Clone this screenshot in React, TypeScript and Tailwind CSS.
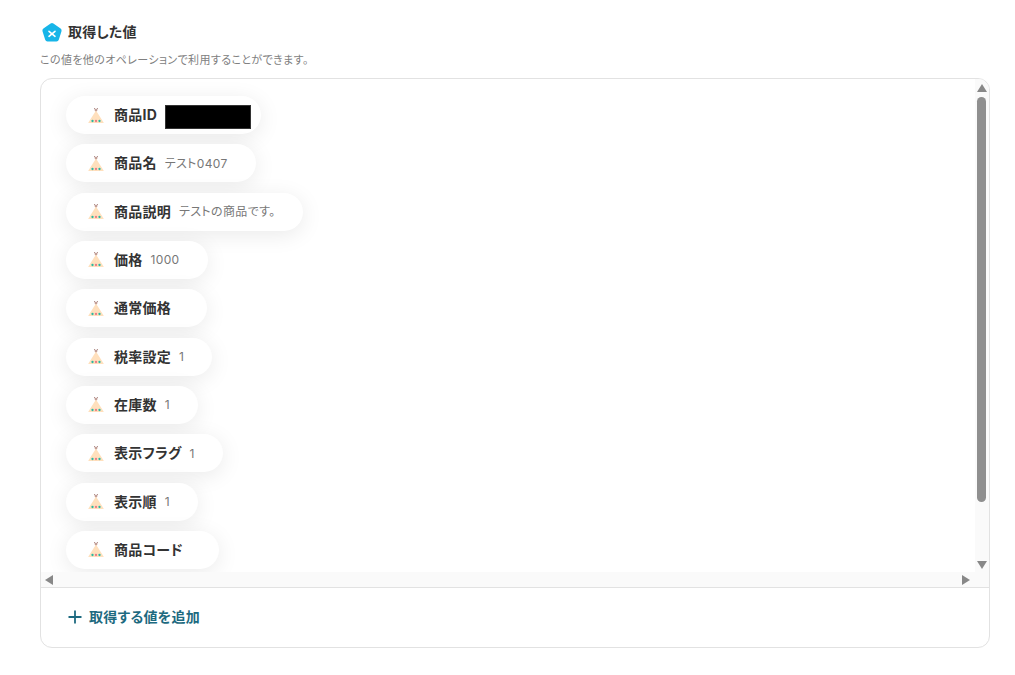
const FONT = "font-['Inter','Noto_Sans_CJK_JP','Noto_Sans',sans-serif] [font-feature-settings:'palt']";

type Row = { label: string; value?: string; redacted?: boolean };

const rows: Row[] = [
  { label: "商品ID", redacted: true },
  { label: "商品名", value: "テスト0407" },
  { label: "商品説明", value: "テストの商品です。" },
  { label: "価格", value: "1000" },
  { label: "通常価格" },
  { label: "税率設定", value: "1" },
  { label: "在庫数", value: "1" },
  { label: "表示フラグ", value: "1" },
  { label: "表示順", value: "1" },
  { label: "商品コード" },
];

function Tipi() {
  return (
    <svg width="16" height="18" viewBox="0 0 16 18" className="mt-[1px] shrink-0">
      <path d="M6.400 1 8 4l1.600-3" fill="none" stroke="#a8807a" strokeWidth="1" />
      <circle cx="8" cy="3.400" r="1.200" fill="#c09a92" />
      <path d="M8 3.500 15.600 15.500a.4.4 0 0 1-.4.6H.8a.4.4 0 0 1-.4-.6Z" fill="#ffe0bd" />
      <circle cx="4.500" cy="14" r="1.150" fill="#2ab8a2" />
      <circle cx="8" cy="14" r="1.150" fill="#ee7b86" />
      <circle cx="11.500" cy="14" r="1.150" fill="#2ab8a2" />
    </svg>
  );
}

function Logo() {
  return (
    <svg width="22" height="22" viewBox="0 0 22 22" className="mt-[1px] shrink-0">
      <path
        d="M9.600 1.400a2.400 2.400 0 0 1 2.800 0l7.200 5.200a2.400 2.400 0 0 1 .9 2.700l-2.700 8.500a2.400 2.400 0 0 1-2.300 1.700H6.500a2.400 2.400 0 0 1-2.300-1.700L1.500 9.300a2.400 2.400 0 0 1 .9-2.700Z"
        fill="#17b5e8"
      />
      <path d="M8 9.300l6 5M14 9.300l-6 5" stroke="#fff" strokeWidth="1.600" strokeLinecap="round" />
    </svg>
  );
}

function Pill({ row }: { row: Row }) {
  return (
    <div className="flex h-[38px] w-fit shrink-0 items-center rounded-full bg-white pl-[22px] pr-[28px] shadow-[0_4px_22px_rgba(0,0,0,0.085)]">
      <Tipi />
      <span className="ml-[10px] text-[14px] font-bold leading-none tracking-[0.25px] whitespace-nowrap text-[#333333]">{row.label}</span>
      {row.redacted ? (
        <span className="ml-[8px] -mr-[18px] mt-[4px] block h-[24px] w-[86px] border border-[#333333] bg-black" />
      ) : (
        <span className="ml-[8px] mt-[1px] text-[12px] leading-none tracking-[0.35px] whitespace-nowrap text-[#777777]">{row.value}</span>
      )}
    </div>
  );
}

export default function App() {
  return (
    <div className={`${FONT} h-[675px] w-[1015px] overflow-hidden bg-white pl-[40px] pr-[25px] pt-[21px]`}>
      <div className="flex h-[22px] items-center gap-[5px] pl-[1px]">
        <Logo />
        <h2 className="text-[14px] font-bold leading-none tracking-[0.2px] text-[#333333]">取得した値</h2>
      </div>
      <p className="mt-[10px] text-[11px] leading-[14px] tracking-[0.38px] text-[#808080]">この値を他のオペレーションで利用することができます。</p>
      <div className="mt-[11px] h-[570px] overflow-hidden rounded-[12px] border border-[#e2e2e2]">
        <div className="flex h-[493px]">
          <div className="flex min-w-0 flex-1 flex-col gap-[10.33px] overflow-hidden pl-[25px] pt-[17px]">
            {rows.map((r) => (
              <Pill key={r.label} row={r} />
            ))}
          </div>
          <div className="flex w-[14px] flex-col items-center bg-[#fafafa] pr-[1px]">
            <svg width="10" height="8" viewBox="0 0 10 8" className="mt-[5px] shrink-0">
              <path d="M5 0 10 8H0Z" fill="#888888" />
            </svg>
            <div className="mt-[5px] h-[405px] w-[9px] rounded-[5px] bg-[#8f8f8f]" />
            <svg width="10" height="8" viewBox="0 0 10 8" className="mt-[59px] shrink-0">
              <path d="M5 8 10 0H0Z" fill="#888888" />
            </svg>
          </div>
        </div>
        <div className="flex h-[15px] items-center justify-between bg-[#fafafa] pl-[4px] pr-[19px]">
          <svg width="8" height="10" viewBox="0 0 8 10">
            <path d="M0 5 8 0V10Z" fill="#888888" />
          </svg>
          <svg width="8" height="10" viewBox="0 0 8 10">
            <path d="M8 5 0 0V10Z" fill="#888888" />
          </svg>
        </div>
        <div className="h-px bg-[#e2e2e2]" />
        <div className="flex h-[59px] items-center gap-[7px] pb-[2px] pl-[27px]">
          <svg width="14" height="14" viewBox="0 0 14 14" className="shrink-0">
            <path d="M7 .5v13M.5 7h13" stroke="#1d6a80" strokeWidth="1.800" />
          </svg>
          <span className="text-[14px] font-bold leading-none tracking-[0.25px] text-[#1d6a80]">取得する値を追加</span>
        </div>
      </div>
    </div>
  );
}
